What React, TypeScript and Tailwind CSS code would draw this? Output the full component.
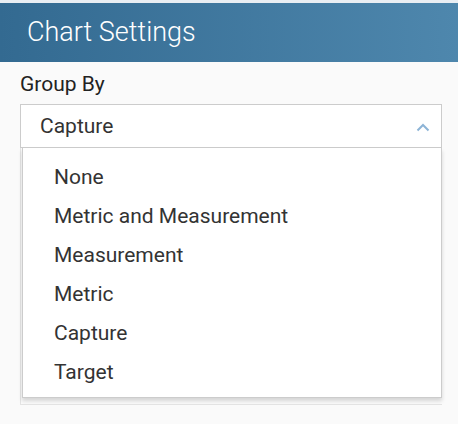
import React from "react";

export default function App() {
  const items = ["None", "Metric and Measurement", "Measurement", "Metric", "Capture", "Target"];
  return (
    <div
      className="w-[458px] h-[424px] bg-[#fafafa] overflow-hidden"
      style={{ fontFamily: "Roboto, 'Noto Sans', sans-serif" }}
    >
      <div className="h-[3px] bg-[#e9eef3]" />
      <div className="h-[59px] bg-gradient-to-r from-[#336a91] to-[#4e87ad] flex items-center pl-[27px]">
        <span className="text-white text-[27px] font-light leading-none">Chart Settings</span>
      </div>
      <div className="px-[20px] pt-[11px]">
        <div className="text-[21px] text-[#222] leading-[22px]">Group By</div>
        <div className="mt-[9px] w-[422px]">
          <div className="h-[44px] border border-[#cccccc] bg-white flex items-center justify-between pl-[19px] pr-[11px]">
            <span className="text-[21px] text-[#333] leading-none">Capture</span>
            <svg width="14" height="9" viewBox="0 0 14 9" fill="none" className="mt-[2px]">
              <path d="M1.5 7.5 L7 2 L12.5 7.5" stroke="#8db4d6" strokeWidth="2" />
            </svg>
          </div>
          <div className="border-l border-b border-[#e4e4e4] pl-px pb-[6px]">
            <div className="border-l border-r border-b border-[#cccccc] bg-white pt-[10px] pb-[5px] shadow-[0_3px_4px_rgba(0,0,0,0.15)]">
              {items.map((it) => (
                <div key={it} className="h-[39px] flex items-center pl-[31px] text-[21px] text-[#333] leading-none">
                  {it}
                </div>
              ))}
            </div>
          </div>
        </div>
      </div>
    </div>
  );
}
